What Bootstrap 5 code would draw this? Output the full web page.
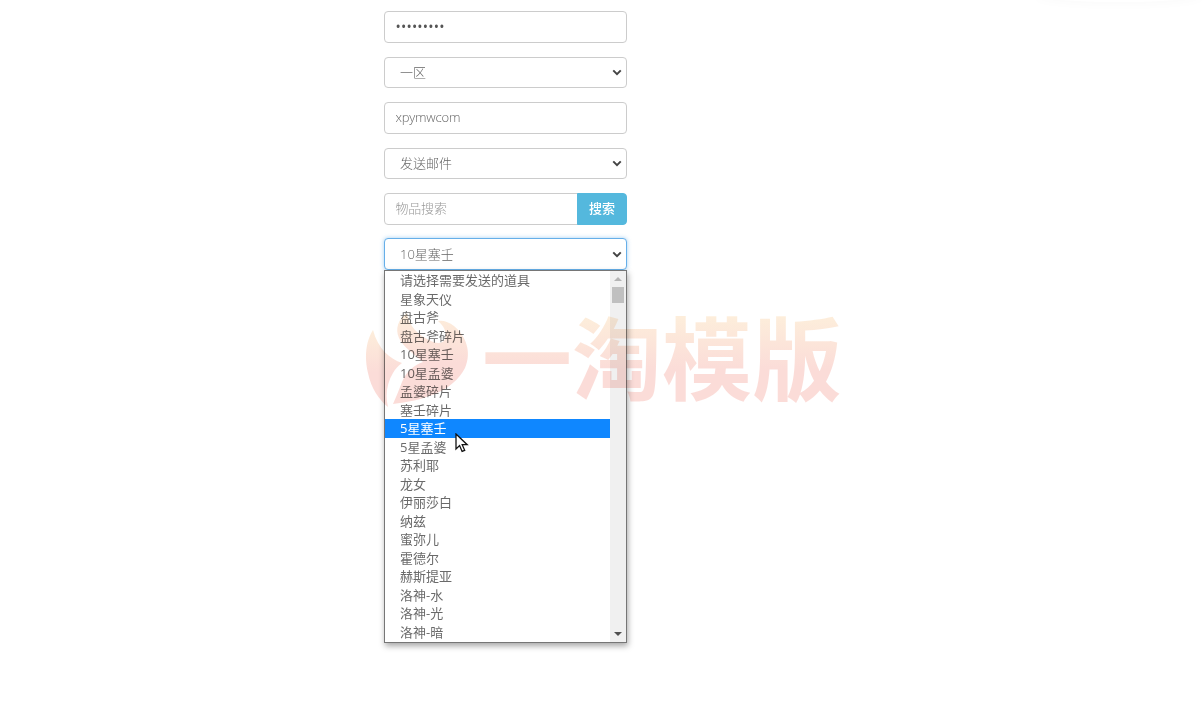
<!DOCTYPE html>
<html lang="zh-CN">
<head>
<meta charset="utf-8">
<title>邮件发送</title>
<link rel="stylesheet" href="https://cdn.jsdelivr.net/npm/bootstrap@5.3.0/dist/css/bootstrap.min.css">
<style>
html,body{height:100%;overflow:hidden;background:#fff}
body{font-family:"Open Sans","Noto Sans CJK SC",sans-serif;font-size:13px;font-weight:300;color:#555}
.stage{position:relative;height:715px;overflow:hidden}
.form-wrap{width:243px;margin-left:384px;padding-top:11.4px;display:flex;flex-direction:column;gap:13.8px;position:relative}
.form-wrap .form-control,.form-wrap .form-select{height:31.6px;min-height:31.6px;font-size:13px;font-weight:300;border:1px solid #ccc;border-radius:4px;color:#666;box-shadow:none;line-height:1.4;padding-top:0;padding-bottom:2px}
.form-wrap .form-control{padding-left:10.5px;padding-right:10px;letter-spacing:-.2px}
.form-wrap .form-select{padding-left:15px;padding-bottom:0;background-image:url("data:image/svg+xml,%3csvg xmlns='http://www.w3.org/2000/svg' viewBox='0 0 12 8'%3e%3cpath fill='none' stroke='%23444' stroke-width='2.4' d='M1.5 1.5 6 6l4.5-4.5'/%3e%3c/svg%3e");background-position:right 4px center;background-size:10px 7px}
.form-wrap .form-control::placeholder{color:#999}
.form-wrap .pw{color:#555;font-size:14px;font-weight:400;letter-spacing:.2px}
.form-wrap .form-select.open{border-color:#66afe9;box-shadow:0 0 4px rgba(102,175,233,.6)}
.go{background:#54b8dd;border:1px solid #54b8dd;color:#fff;font-size:13px;font-weight:500;width:50px;height:31.6px;padding:0;border-radius:0 4px 4px 0}
.go:hover{background:#54b8dd;border-color:#54b8dd;color:#fff}
.menu-box{position:absolute;left:0;top:270px;width:243px;height:373px;background:#fff;border:1px solid #767676;box-shadow:1px 3px 6px rgba(0,0,0,.35);display:flex;z-index:1}
.menu-rows{flex:1 1 auto;list-style:none;margin:0;padding:0;overflow:hidden}
.menu-rows li{height:18.52px;line-height:18.5px;padding-left:15px;font-size:13px;font-weight:400;color:#6a6a6a;white-space:nowrap}
.menu-rows li.on{background:#0f87ff;color:#fff}
.bar{flex:0 0 16px;background:#f0f0f0;position:relative}
.thumb{position:absolute;left:2px;right:2px;top:16px;height:16px;background:#c0c0c0}
.arr{position:absolute;left:4px;width:0;height:0;border-left:4px solid transparent;border-right:4px solid transparent}
.arr.up{top:6px;border-bottom:4px solid #b4b4b4}
.arr.dn{bottom:6px;border-top:4px solid #505050}
.mark-wm{position:absolute;left:365px;top:305px;width:480px;height:105px;z-index:2;pointer-events:none;mix-blend-mode:multiply}
.wm-text{position:absolute;left:117px;top:-6px;font-family:"Noto Sans CJK SC",sans-serif;font-weight:700;font-size:90px;line-height:110px;letter-spacing:0;white-space:nowrap;background:linear-gradient(#fdeedb 15%,#fbdcd8 65%);-webkit-background-clip:text;background-clip:text;color:transparent}
.wm-logo{position:absolute;left:0;top:0}
.pointer{position:absolute;left:455px;top:433px;z-index:3}
.glow{position:absolute;right:0;top:-14px;width:170px;height:16px;border-radius:50%;box-shadow:0 3px 10px rgba(0,0,0,.02)}
</style>
</head>
<body>
<div class="stage">
  <div class="glow"></div>
  <form class="form-wrap">
    <input class="form-control pw" type="password" value="123456789">
    <select class="form-select"><option>一区</option></select>
    <input class="form-control" type="text" value="xpymwcom">
    <select class="form-select"><option>发送邮件</option></select>
    <div class="input-group">
      <input class="form-control" type="text" placeholder="物品搜索">
      <button class="btn go" type="button">搜索</button>
    </div>
    <select class="form-select open"><option>10星塞壬</option></select>
    <div class="menu-box">
      <ul class="menu-rows">
        <li>请选择需要发送的道具</li>
        <li>星象天仪</li>
        <li>盘古斧</li>
        <li>盘古斧碎片</li>
        <li>10星塞壬</li>
        <li>10星孟婆</li>
        <li>孟婆碎片</li>
        <li>塞壬碎片</li>
        <li class="on">5星塞壬</li>
        <li>5星孟婆</li>
        <li>苏利耶</li>
        <li>龙女</li>
        <li>伊丽莎白</li>
        <li>纳兹</li>
        <li>蜜弥儿</li>
        <li>霍德尔</li>
        <li>赫斯提亚</li>
        <li>洛神-水</li>
        <li>洛神-光</li>
        <li>洛神-暗</li>
      </ul>
      <div class="bar"><i class="arr up"></i><i class="thumb"></i><i class="arr dn"></i></div>
    </div>
  </form>
  <div class="mark-wm">
    <svg class="wm-logo" width="110" height="105" viewBox="0 0 110 105">
      <defs><linearGradient id="lg" x1="0" y1="0" x2="0" y2="1"><stop offset="0" stop-color="#fdeedb"/><stop offset=".55" stop-color="#fbdcd8"/></linearGradient></defs>
      <path fill="url(#lg)" d="M8 25C1 36-1 52 3 68c3 15 11 27 20 34-3-12-1-24 5-34 2-4 5-7 9-10-12-4-24-14-29-33Z"/>
      <path fill="url(#lg)" d="M42 8c-9 6-12 16-8 25 4 9 14 15 24 24-9 3-17 10-21 20-3 8-6 15-9 22 28-3 60-12 72-36 7-16 1-32-11-42-5-4-11-6-16-5 6 5 9 11 7 18-2 5-9 5-16 1C54 30 44 22 42 8Z"/>
    </svg>
    <div class="wm-text">一淘模版</div>
  </div>
  <svg class="pointer" width="14" height="20" viewBox="0 0 14 20"><path d="M1 1v15l3.6-3.4 2.5 5.8 2.6-1.1-2.5-5.6h5L1 1Z" fill="#fff" stroke="#111" stroke-width="1.3"/></svg>
</div>
<script src="https://cdn.jsdelivr.net/npm/bootstrap@5.3.0/dist/js/bootstrap.bundle.min.js"></script>
</body>
</html>
